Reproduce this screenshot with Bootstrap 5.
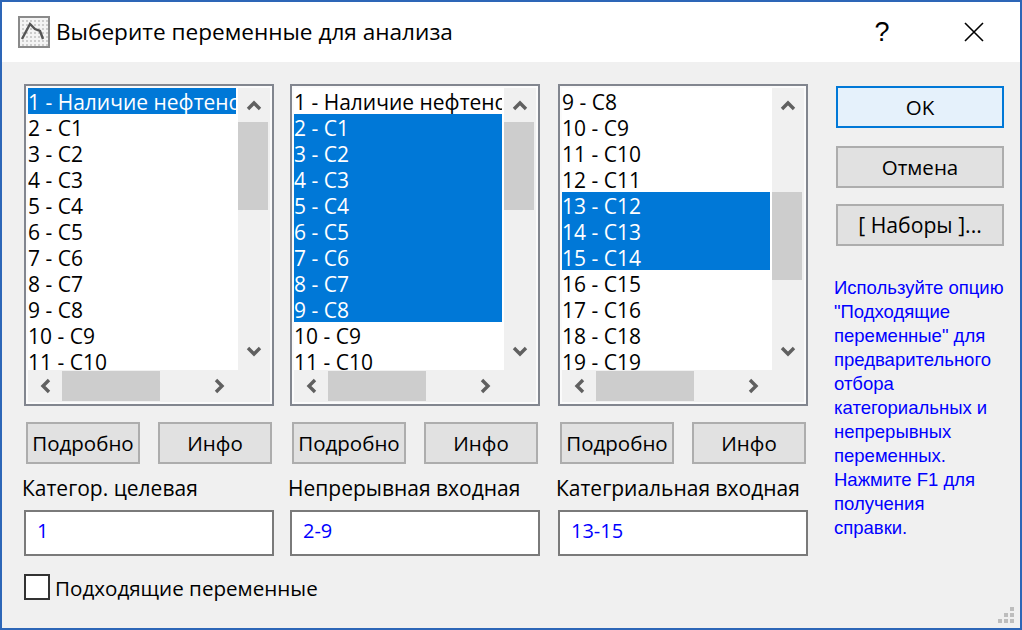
<!DOCTYPE html>
<html lang="ru">
<head>
<meta charset="utf-8">
<title>Выберите переменные для анализа</title>
<link rel="stylesheet" href="https://cdn.jsdelivr.net/npm/bootstrap@5.3.0/dist/css/bootstrap.min.css">
<style>
html,body{width:1022px;height:630px;margin:0;overflow:hidden;background:#f0f0f0}
body{font-family:"Open Sans","Noto Sans",sans-serif;color:#000}
.win{width:1022px;height:630px;border:2px solid #2d66b7;background:#f0f0f0;position:relative}
.ttl{height:60px;background:#fff;padding-left:16px}
.ttl-text{font-size:22.6px;margin-left:6px;flex:1;white-space:nowrap}
.ttl-q{font-size:27px;width:30px;text-align:center;margin-right:67px;font-family:"Liberation Sans",sans-serif}
.ttl-x{margin-right:36px}
.pane{padding:22px 16px 0 22px}
.colz{width:250px}
.colz2{margin-left:16px}
.colz3{margin-left:18px}
.lbx{height:322px;border:2px solid #82868f;padding:2px;display:grid;grid-template-columns:210px 32px;grid-template-rows:282px 32px;background:#fbfbfb}
.rows{overflow:hidden;background:#fff;border-radius:0;display:block;border-right:2px solid #fff}
.list-group-item.rowz,.list-group-item.rowz+.list-group-item.rowz{border:0;border-radius:0;padding:2px 0 0;margin:0;height:26px;line-height:24px;font-size:21px;white-space:nowrap;color:#000;background:#fff}
.list-group-item.rowz.active,.list-group-item.rowz+.list-group-item.rowz.active{background:#0078d7;color:#fff}
.vbar{background:#f0f0f0;display:flex;flex-direction:column;align-items:center}
.hbar{grid-column:1/3;background:#f0f0f0;display:flex;align-items:center;justify-content:flex-start}
.vthumb{width:30px;height:88px;background:#cdcdcd;align-self:flex-start}
.hthumb{width:98px;height:30px;background:#cdcdcd;flex:none}
.vup{height:34px;display:flex;align-items:center}
.vgap{height:70px}
.vdn{margin-top:auto;height:37px;display:flex;align-items:center}
.hl{width:34px;display:flex;justify-content:center}
.hr{width:46px;margin-left:auto;margin-right:27px;display:flex;justify-content:center}
.gbtns{display:flex;gap:18px;margin:16px 0 0 2px}
.wbtn{background:#e1e1e1;border:2px solid #adadad;border-radius:0;color:#000;font-size:20.5px;padding:0;height:42px;line-height:36px;width:114px;white-space:nowrap}
.wbtn:hover{background:#e1e1e1;border-color:#adadad;color:#000}
.capt{font-size:21px;line-height:26px;margin:11px 0 9px -2px;white-space:nowrap}
.fldz{height:46px;border:2px solid #7a7a7a;border-radius:0;background:#fff;color:#00f;font-size:20px;padding:0 11px;line-height:38px}
.sidez{width:168px;margin-left:28px;padding-top:2px}
.sidez .wbtn{width:168px}
.okz,.okz:hover{background:#e5f1fb;border-color:#0078d7}
.s1{margin-top:18px}
.s2{margin-top:16px}
.sets{font-size:21.2px}
.tipz{color:#00f;font-family:"Liberation Sans",sans-serif;font-size:18.5px;line-height:24px;margin:30px -6px 0 -2px;white-space:pre}
.chkrow{margin-top:18px;gap:5px;white-space:nowrap}
.chkbx{width:26px;height:26px;border:2px solid #333;background:#fff;border-radius:0!important;margin:0;flex:none}
.chkl{font-size:20.6px;line-height:24px;padding-top:2px}
.grip{position:absolute;right:6px;bottom:5px}
</style>
</head>
<body>
<div class="win">
  <div class="ttl d-flex align-items-center">
    <svg width="32" height="32" viewBox="0 0 32 32"><defs><pattern id="dz" width="4" height="4" patternUnits="userSpaceOnUse"><rect width="4" height="4" fill="#f4f4f4"/><rect width="2" height="2" fill="#cdcdcd"/></pattern></defs><rect x="1" y="1" width="30" height="30" fill="url(#dz)" stroke="#8a8a8a" stroke-width="2"/><path d="M4 23 12 8 17 13 22 15 25 23" fill="none" stroke="#555" stroke-width="2.4"/></svg>
    <div class="ttl-text">Выберите переменные для анализа</div>
    <div class="ttl-q">?</div>
    <svg class="ttl-x" width="20" height="20" viewBox="0 0 20 20"><path d="M1 1 19 19M19 1 1 19" stroke="#000" stroke-width="1.6"/></svg>
  </div>
  <div class="pane d-flex">
    <div class="colz">
      <div class="lbx">
        <div class="list-group rows">
          <div class="list-group-item rowz active">1 - Наличие нефтено</div>
          <div class="list-group-item rowz">2 - C1</div><div class="list-group-item rowz">3 - C2</div><div class="list-group-item rowz">4 - C3</div><div class="list-group-item rowz">5 - C4</div><div class="list-group-item rowz">6 - C5</div><div class="list-group-item rowz">7 - C6</div><div class="list-group-item rowz">8 - C7</div><div class="list-group-item rowz">9 - C8</div><div class="list-group-item rowz">10 - C9</div><div class="list-group-item rowz">11 - C10</div>
        </div>
        <div class="vbar">
          <div class="vup"><svg width="16" height="12" viewBox="0 0 16 12"><path d="M2 10 8 4 14 10" fill="none" stroke="#606060" stroke-width="3.4"/></svg></div>
          <div class="vthumb"></div>
          <div class="vdn"><svg width="16" height="12" viewBox="0 0 16 12"><path d="M2 2 8 8 14 2" fill="none" stroke="#606060" stroke-width="3.4"/></svg></div>
        </div>
        <div class="hbar">
          <div class="hl"><svg width="12" height="16" viewBox="0 0 12 16"><path d="M10 2 4 8 10 14" fill="none" stroke="#606060" stroke-width="3.4"/></svg></div>
          <div class="hthumb"></div>
          <div class="hr"><svg width="12" height="16" viewBox="0 0 12 16"><path d="M2 2 8 8 2 14" fill="none" stroke="#606060" stroke-width="3.4"/></svg></div>
        </div>
      </div>
      <div class="gbtns"><button class="btn wbtn" type="button">Подробно</button><button class="btn wbtn" type="button">Инфо</button></div>
      <div class="capt">Категор. целевая</div>
      <div class="fldz">1</div>
      <div class="d-flex align-items-center chkrow"><input class="form-check-input chkbx" type="checkbox"><span class="chkl">Подходящие переменные</span></div>
    </div>
    <div class="colz colz2">
      <div class="lbx">
        <div class="list-group rows">
          <div class="list-group-item rowz">1 - Наличие нефтено</div>
          <div class="list-group-item rowz active">2 - C1</div><div class="list-group-item rowz active">3 - C2</div><div class="list-group-item rowz active">4 - C3</div><div class="list-group-item rowz active">5 - C4</div><div class="list-group-item rowz active">6 - C5</div><div class="list-group-item rowz active">7 - C6</div><div class="list-group-item rowz active">8 - C7</div><div class="list-group-item rowz active">9 - C8</div><div class="list-group-item rowz">10 - C9</div><div class="list-group-item rowz">11 - C10</div>
        </div>
        <div class="vbar">
          <div class="vup"><svg width="16" height="12" viewBox="0 0 16 12"><path d="M2 10 8 4 14 10" fill="none" stroke="#606060" stroke-width="3.4"/></svg></div>
          <div class="vthumb"></div>
          <div class="vdn"><svg width="16" height="12" viewBox="0 0 16 12"><path d="M2 2 8 8 14 2" fill="none" stroke="#606060" stroke-width="3.4"/></svg></div>
        </div>
        <div class="hbar">
          <div class="hl"><svg width="12" height="16" viewBox="0 0 12 16"><path d="M10 2 4 8 10 14" fill="none" stroke="#606060" stroke-width="3.4"/></svg></div>
          <div class="hthumb"></div>
          <div class="hr"><svg width="12" height="16" viewBox="0 0 12 16"><path d="M2 2 8 8 2 14" fill="none" stroke="#606060" stroke-width="3.4"/></svg></div>
        </div>
      </div>
      <div class="gbtns"><button class="btn wbtn" type="button">Подробно</button><button class="btn wbtn" type="button">Инфо</button></div>
      <div class="capt">Непрерывная входная</div>
      <div class="fldz">2-9</div>
    </div>
    <div class="colz colz3">
      <div class="lbx">
        <div class="list-group rows">
          <div class="list-group-item rowz">9 - C8</div><div class="list-group-item rowz">10 - C9</div><div class="list-group-item rowz">11 - C10</div><div class="list-group-item rowz">12 - C11</div>
          <div class="list-group-item rowz active">13 - C12</div><div class="list-group-item rowz active">14 - C13</div><div class="list-group-item rowz active">15 - C14</div>
          <div class="list-group-item rowz">16 - C15</div><div class="list-group-item rowz">17 - C16</div><div class="list-group-item rowz">18 - C18</div><div class="list-group-item rowz">19 - C19</div>
        </div>
        <div class="vbar">
          <div class="vup"><svg width="16" height="12" viewBox="0 0 16 12"><path d="M2 10 8 4 14 10" fill="none" stroke="#606060" stroke-width="3.4"/></svg></div>
          <div class="vgap"></div>
          <div class="vthumb"></div>
          <div class="vdn"><svg width="16" height="12" viewBox="0 0 16 12"><path d="M2 2 8 8 14 2" fill="none" stroke="#606060" stroke-width="3.4"/></svg></div>
        </div>
        <div class="hbar">
          <div class="hl"><svg width="12" height="16" viewBox="0 0 12 16"><path d="M10 2 4 8 10 14" fill="none" stroke="#606060" stroke-width="3.4"/></svg></div>
          <div class="hthumb"></div>
          <div class="hr"><svg width="12" height="16" viewBox="0 0 12 16"><path d="M2 2 8 8 2 14" fill="none" stroke="#606060" stroke-width="3.4"/></svg></div>
        </div>
      </div>
      <div class="gbtns"><button class="btn wbtn" type="button">Подробно</button><button class="btn wbtn" type="button">Инфо</button></div>
      <div class="capt">Категриальная входная</div>
      <div class="fldz">13-15</div>
    </div>
    <div class="sidez">
      <button class="btn wbtn okz d-block" type="button">OK</button>
      <button class="btn wbtn s1 d-block" type="button">Отмена</button>
      <button class="btn wbtn s2 d-block sets" type="button">[ Наборы ]...</button>
      <div class="tipz">Используйте опцию
"Подходящие
переменные" для
предварительного
отбора
категориальных и
непрерывных
переменных.
Нажмите F1 для
получения
справки.</div>
    </div>
  </div>
  <svg class="grip" width="16" height="16" viewBox="0 0 16 16" fill="#bdbdbd"><rect x="12" y="0" width="4" height="4"/><rect x="6" y="6" width="4" height="4"/><rect x="12" y="6" width="4" height="4"/><rect x="0" y="12" width="4" height="4"/><rect x="6" y="12" width="4" height="4"/><rect x="12" y="12" width="4" height="4"/></svg>
</div>
</body>
</html>
